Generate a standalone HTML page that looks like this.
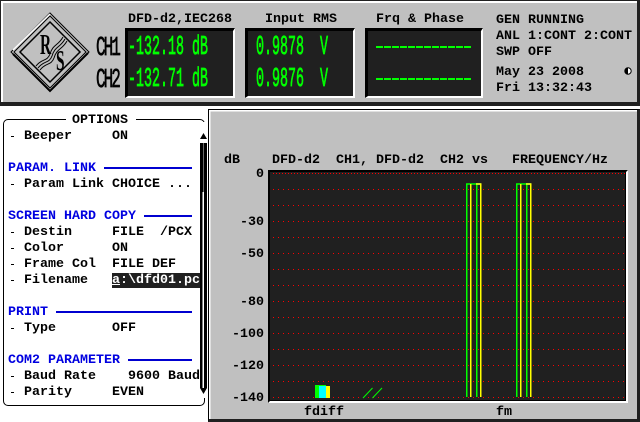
<!DOCTYPE html>
<html><head><meta charset="utf-8"><style>
html,body{margin:0;padding:0;background:#fff;width:640px;height:422px;overflow:hidden}
#r{position:relative;width:640px;height:422px;overflow:hidden;font-family:"Liberation Mono",monospace;font-weight:bold;font-size:13.33px;color:#000}
.a{position:absolute}
.t{position:absolute;white-space:pre;line-height:16px;height:16px;margin-top:2px}
.b{color:#0000e0}
.g{color:#00ff00}
.tall{position:absolute;white-space:pre;line-height:16px;height:16px;transform-origin:0 50%;transform:scaleY(2);font-weight:normal;-webkit-text-stroke:.4px currentColor}
.disp{position:absolute;top:28px;height:70px;background:#202020;box-sizing:border-box;border-top:3px solid #000;border-left:3px solid #000;border-right:2px solid #fff;border-bottom:2px solid #fff;outline:0}
.d{position:absolute;left:11px;width:3px;height:1px;margin-top:1px;background:#000}
.l{position:absolute;height:1.5px;background:#0000d0}
</style></head><body><div id="r">
<div class="a" style="left:0;top:0;width:640px;height:106px;background:#c0c0c0;box-sizing:border-box;border-top:1px solid #202020;border-left:1px solid #202020;box-shadow:inset 2px 2px 0 #fff;border-right:3px solid #202020;border-bottom:4px solid #202020"></div>
<svg class="a" style="left:0;top:0" width="100" height="100" viewBox="0 0 100 100">
<g fill="none">
<path d="M50 13 L89 52 L50 91 L11 52 Z" stroke="#000"/>
<path d="M50 16 L86 52 L50 88 L14 52 Z" stroke="#000"/>
<path d="M50 22 L80 52 L50 82 L20 52 Z" stroke="#000" stroke-width="1.5"/>
<path d="M13 54 L50 91 L88 53" stroke="#000" stroke-width="2"/>
<path d="M13 50 L50 14" stroke="#fff" stroke-width="1.5"/>
<path d="M36 66 C42 58 47 62 50 54 C53 44 58 46 63 37" stroke="#000"/>
<path d="M38 68 C44 60 49 64 52 56 C55 46 60 48 65 39" stroke="#000"/>
<path d="M40 70 C46 62 51 66 54 58 C57 48 62 50 67 41" stroke="#000"/>
</g></svg>
<div class="a" style="left:40px;top:32px;font:bold 28px/28px 'Liberation Serif',serif;transform:scaleX(.55);transform-origin:0 0">R</div>
<div class="a" style="left:56px;top:48px;font:bold 28px/28px 'Liberation Serif',serif;transform:scaleX(.55);transform-origin:0 0">S</div>
<div class="tall" style="left:96px;top:40px;color:#000;font-size:16px;letter-spacing:-2px;transform:scaleY(1.7)">CH1</div>
<div class="tall" style="left:96px;top:72px;color:#000;font-size:16px;letter-spacing:-2px;transform:scaleY(1.7)">CH2</div>
<div class="t" style="left:128px;top:10px">DFD-d2,IEC268</div>
<div class="t" style="left:265px;top:10px">Input RMS</div>
<div class="t" style="left:376px;top:10px">Frq &amp; Phase</div>
<div class="disp" style="left:125px;width:110px"></div>
<div class="disp" style="left:245px;width:110px"></div>
<div class="disp" style="left:365px;width:118px"></div>
<div class="tall g" style="left:128px;top:42px">-132.18 dB</div>
<div class="tall g" style="left:128px;top:74px">-132.71 dB</div>
<div class="tall g" style="left:256px;top:42px">0.9878  V</div>
<div class="tall g" style="left:256px;top:74px">0.9876  V</div>
<svg class="a" style="left:376px;top:40px" width="96" height="42"><path d="M0 7H96M0 39H96" stroke="#00ff00" stroke-width="2" stroke-dasharray="7 1"/></svg>
<div class="t" style="left:496px;top:11px">GEN RUNNING</div>
<div class="t" style="left:496px;top:27px">ANL 1:CONT 2:CONT</div>
<div class="t" style="left:496px;top:43px">SWP OFF</div>
<div class="t" style="left:496px;top:63px">May 23 2008</div>
<div class="t" style="left:496px;top:79px">Fri 13:32:43</div>
<svg class="a" style="left:624px;top:67px" width="8" height="8"><circle cx="4" cy="4" r="3.2" fill="#fff" stroke="#000"/><path d="M4 .8A3.2 3.2 0 0 0 4 7.2Z" fill="#000"/></svg>

<div class="a" style="left:3px;top:119px;width:202px;height:287px;box-sizing:border-box;border:1.5px solid #000;border-radius:5px"></div>
<div class="a" style="left:66px;top:112px;width:70px;height:14px;background:#fff"></div>
<div class="t" style="left:72px;top:111px;">OPTIONS</div>
<div class="a" style="left:199px;top:122px;width:9px;height:276px;background:#fff"></div>
<svg class="a" style="left:198px;top:130px" width="10" height="270">
<path d="M5.5 3L9 9H2Z" fill="#000"/>
<rect x="2" y="13" width="2.5" height="245"/>
<rect x="6" y="13" width="3" height="245"/>
<rect x="4.5" y="13" width="1.5" height="49" fill="#000"/>
<rect x="5" y="13" width=".8" height="49" fill="#888"/>
<path d="M2 258H9L5.5 264Z" fill="#000"/>
</svg>
<div class="d" style="top:135px"></div><div class="t" style="left:24px;top:127px">Beeper</div><div class="t" style="left:112px;top:127px">ON</div>
<div class="t b" style="left:8px;top:159px">PARAM. LINK</div><div class="l" style="left:104px;top:167px;width:88px"></div>
<div class="d" style="top:183px"></div><div class="t" style="left:24px;top:175px">Param Link</div><div class="t" style="left:112px;top:175px">CHOICE ...</div>
<div class="t b" style="left:8px;top:207px">SCREEN HARD COPY</div><div class="l" style="left:144px;top:215px;width:48px"></div>
<div class="d" style="top:231px"></div><div class="t" style="left:24px;top:223px">Destin</div><div class="t" style="left:112px;top:223px">FILE  /PCX</div>
<div class="d" style="top:247px"></div><div class="t" style="left:24px;top:239px">Color</div><div class="t" style="left:112px;top:239px">ON</div>
<div class="d" style="top:263px"></div><div class="t" style="left:24px;top:255px">Frame Col</div><div class="t" style="left:112px;top:255px">FILE DEF</div>
<div class="d" style="top:279px"></div><div class="t" style="left:24px;top:271px">Filename</div>
<div class="a" style="left:112px;top:273px;width:88px;height:15px;background:#202020"></div>
<div class="t" style="left:112px;top:271px;color:#fff"><span style="text-decoration:underline">a</span>:\dfd01.pc</div>
<div class="t b" style="left:8px;top:303px">PRINT</div><div class="l" style="left:56px;top:311px;width:136px"></div>
<div class="d" style="top:327px"></div><div class="t" style="left:24px;top:319px">Type</div><div class="t" style="left:112px;top:319px">OFF</div>
<div class="t b" style="left:8px;top:351px">COM2 PARAMETER</div><div class="l" style="left:128px;top:359px;width:64px"></div>
<div class="d" style="top:375px"></div><div class="t" style="left:24px;top:367px">Baud Rate</div><div class="t" style="left:128px;top:367px">9600 Baud</div>
<div class="d" style="top:391px"></div><div class="t" style="left:24px;top:383px">Parity</div><div class="t" style="left:112px;top:383px">EVEN</div>

<div class="a" style="left:208px;top:109px;width:432px;height:313px;background:#c0c0c0;box-sizing:border-box;border-top:1.5px solid #000;border-left:1.5px solid #000;box-shadow:inset 1.5px 1.5px 0 #fff;border-right:3px solid #202020;border-bottom:3px solid #202020"></div>
<div class="a" style="left:268px;top:170px;width:360px;height:233px;box-sizing:border-box;background:#202020;border-top:2px solid #000;border-left:2px solid #000;border-right:2px solid #fff;border-bottom:2px solid #fff;box-shadow:inset -1px -1px 0 #000"></div>
<svg class="a" style="left:268px;top:170px" width="360" height="232">
<path d="M5 3.5H358" stroke="#ff0000" stroke-width="1" stroke-dasharray="1 2" shape-rendering="crispEdges"/>
<path d="M5 19.5H358M5 35.5H358M5 51.5H358M5 67.5H358M5 83.5H358M5 99.5H358M5 115.5H358M5 131.5H358M5 147.5H358M5 163.5H358M5 179.5H358M5 195.5H358M5 211.5H358M5 227.5H358" stroke="#ff0000" stroke-width="1" stroke-dasharray="1 4" shape-rendering="crispEdges"/>
<g fill="none" stroke-width="1.5">
<path d="M198.75 227V14H208" stroke="#00ff00"/><path d="M208 14H213" stroke="#00e0ff"/>
<path d="M208.75 227V14" stroke="#00ff00"/>
<path d="M202.75 227V14" stroke="#ffff00"/><path d="M212.75 227V14H208" stroke="#ffff00"/>
<path d="M248.75 227V14H258" stroke="#00ff00"/><path d="M258 14H263" stroke="#00e0ff"/>
<path d="M258.75 227V14" stroke="#00ff00"/>
<path d="M252.75 227V14" stroke="#ffff00"/><path d="M262.75 227V14H258" stroke="#ffff00"/>
<path d="M95 228L104.5 218M104.5 228L114 218" stroke="#00ff00" stroke-width="1"/>
</g>
<rect x="47" y="215" width="11" height="13" fill="#00ff00"/>
<rect x="51" y="216" width="11" height="12" fill="#00ffff"/>
<rect x="58" y="216" width="4" height="12" fill="#ffff00"/>
</svg>
<div class="t" style="left:224px;top:151px">dB</div>
<div class="t" style="left:272px;top:151px">DFD-d2</div>
<div class="t" style="left:336px;top:151px">CH1, DFD-d2</div>
<div class="t" style="left:440px;top:151px">CH2 vs</div>
<div class="t" style="left:512px;top:151px">FREQUENCY/Hz</div>
<div class="t" style="left:256px;top:165px">0</div>
<div class="t" style="left:240px;top:213px">-30</div>
<div class="t" style="left:240px;top:245px">-50</div>
<div class="t" style="left:240px;top:293px">-80</div>
<div class="t" style="left:232px;top:325px">-100</div>
<div class="t" style="left:232px;top:357px">-120</div>
<div class="t" style="left:232px;top:389px">-140</div>
<div class="t" style="left:304px;top:403px">fdiff</div>
<div class="t" style="left:496px;top:403px">fm</div>
</div></body></html>
